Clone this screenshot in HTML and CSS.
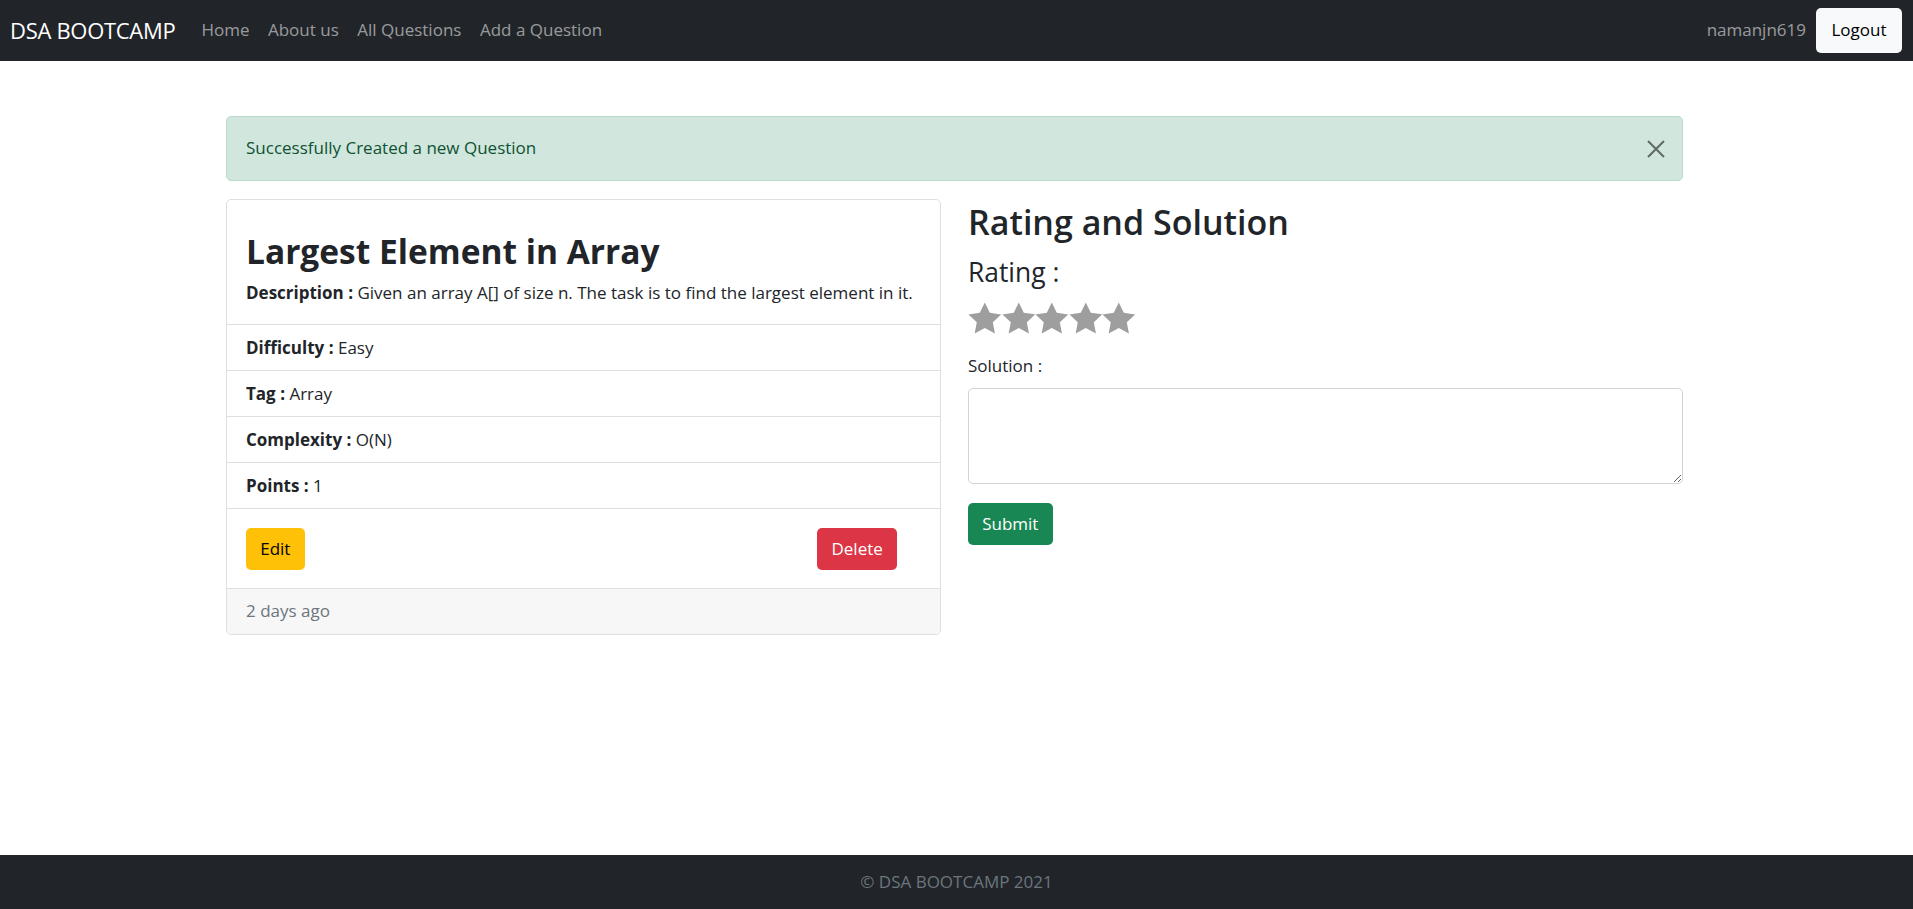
FILE: index.html
```html
<!DOCTYPE html>
<html lang="en">
<head>
<meta charset="utf-8">
<title>DSA BOOTCAMP</title>
<link rel="stylesheet" href="styles.css">
</head>
<body>
<nav class="navbar">
  <div class="nav-left">
    <a class="brand" href="#">DSA BOOTCAMP</a>
    <ul class="nav-links">
      <li><a href="#">Home</a></li>
      <li><a href="#">About us</a></li>
      <li><a href="#">All Questions</a></li>
      <li><a href="#">Add a Question</a></li>
    </ul>
  </div>
  <div class="nav-right">
    <span class="user">namanjn619</span>
    <button class="btn btn-light">Logout</button>
  </div>
</nav>

<main class="container">
  <div class="alert">
    <span>Successfully Created a new Question</span>
    <button class="btn-close" aria-label="Close">
      <svg width="18" height="18" viewBox="0 0 18 18"><path d="M1 1L17 17M17 1L1 17" stroke="#5e6a65" stroke-width="2" fill="none"/></svg>
    </button>
  </div>

  <div class="row">
    <div class="col">
      <div class="card">
        <div class="card-body">
          <h2 class="card-title">Largest Element in Array</h2>
          <p class="card-text"><b>Description :</b> Given an array A[] of size n. The task is to find the largest element in it.</p>
        </div>
        <ul class="list-group">
          <li class="list-item"><b>Difficulty :</b> Easy</li>
          <li class="list-item"><b>Tag :</b> Array</li>
          <li class="list-item"><b>Complexity :</b> O(N)</li>
          <li class="list-item"><b>Points :</b> 1</li>
        </ul>
        <div class="card-actions">
          <a class="btn btn-warning" href="#">Edit</a>
          <button class="btn btn-danger">Delete</button>
        </div>
        <div class="card-footer">2 days ago</div>
      </div>
    </div>

    <div class="col">
      <h2 class="side-title">Rating and Solution</h2>
      <h4 class="rating-title">Rating :</h4>
      <div class="stars">
        <svg viewBox="0.9 0.9 22.2 21.2" preserveAspectRatio="none" class="star"><path d="M12 1.2l3.3 6.9 7.5 1-5.5 5.2 1.4 7.5L12 18.2l-6.7 3.6 1.4-7.5L1.2 9.1l7.5-1z"/></svg>
        <svg viewBox="0.9 0.9 22.2 21.2" preserveAspectRatio="none" class="star"><path d="M12 1.2l3.3 6.9 7.5 1-5.5 5.2 1.4 7.5L12 18.2l-6.7 3.6 1.4-7.5L1.2 9.1l7.5-1z"/></svg>
        <svg viewBox="0.9 0.9 22.2 21.2" preserveAspectRatio="none" class="star"><path d="M12 1.2l3.3 6.9 7.5 1-5.5 5.2 1.4 7.5L12 18.2l-6.7 3.6 1.4-7.5L1.2 9.1l7.5-1z"/></svg>
        <svg viewBox="0.9 0.9 22.2 21.2" preserveAspectRatio="none" class="star"><path d="M12 1.2l3.3 6.9 7.5 1-5.5 5.2 1.4 7.5L12 18.2l-6.7 3.6 1.4-7.5L1.2 9.1l7.5-1z"/></svg>
        <svg viewBox="0.9 0.9 22.2 21.2" preserveAspectRatio="none" class="star"><path d="M12 1.2l3.3 6.9 7.5 1-5.5 5.2 1.4 7.5L12 18.2l-6.7 3.6 1.4-7.5L1.2 9.1l7.5-1z"/></svg>
      </div>
      <label class="form-label" for="solution">Solution :</label>
      <textarea id="solution" class="form-control" rows="3"></textarea>
      <button class="btn btn-success">Submit</button>
    </div>
  </div>
</main>

<footer class="footer">© DSA BOOTCAMP 2021</footer>
</body>
</html>
```

FILE: styles.css
```css
* { box-sizing: border-box; }

html, body { margin: 0; padding: 0; }

body {
  font-family: "Open Sans", "Noto Sans", sans-serif;
  font-size: 17px;
  line-height: 26.4px;
  color: #212529;
  background: #fff;
  min-height: 909px;
  display: flex;
  flex-direction: column;
}

a { text-decoration: none; }

/* Navbar */
.navbar {
  background: #212529;
  height: 61px;
  display: flex;
  align-items: center;
  justify-content: space-between;
  padding: 0 11px 0 10px;
}
.nav-left { display: flex; align-items: center; }
.brand {
  color: #fff;
  font-size: 22px;
  letter-spacing: -0.3px;
  margin-right: 26px;
}
.nav-links {
  list-style: none;
  margin: 0;
  padding: 0;
  display: flex;
  gap: 18.5px;
}
.nav-links a { color: rgba(255,255,255,.55); }
.nav-right { display: flex; align-items: center; }
.user { color: rgba(255,255,255,.55); margin-right: 10px; }

.btn {
  display: inline-block;
  font-family: inherit;
  font-size: 17px;
  line-height: 26.4px;
  height: 42px;
  padding: 6.8px 13.2px;
  border: 1px solid transparent;
  border-radius: 5px;
  cursor: pointer;
}
.btn-light {
  background: #f8f9fa;
  color: #000;
  height: 45px;
  width: 86px;
  padding: 0;
}
.btn-warning { background: #ffc107; color: #000; }
.btn-danger { background: #dc3545; color: #fff; }
.btn-success { background: #198754; color: #fff; }

/* Main */
.container {
  flex: 1;
  width: 1457px;
  margin: 55px auto 0 226px;
}

.alert {
  height: 65px;
  background: #d1e7dd;
  border: 1px solid #badbcc;
  color: #0f5132;
  border-radius: 5px;
  padding: 0 17px 0 19px;
  display: flex;
  align-items: center;
  justify-content: space-between;
  margin-bottom: 18px;
}
.btn-close {
  background: none;
  border: 0;
  padding: 0;
  width: 18px;
  height: 18px;
  display: flex;
  cursor: pointer;
}

.row {
  display: grid;
  grid-template-columns: 1fr 1fr;
  column-gap: 27px;
  align-items: start;
}

.card {
  border: 1px solid #dfdfdf;
  border-radius: 5px;
  overflow: hidden;
}
.card-body { padding: 29.5px 17.6px 17.6px 19px; }
.card-title {
  margin: 0 0 8.8px;
  font-size: 33.5px;
  line-height: 42px;
  font-weight: 700;
}
.card-text { margin: 0; }

.list-group { list-style: none; margin: 0; padding: 0; }
.list-item {
  border-top: 1px solid #dfdfdf;
  padding: 9.3px 17.6px 9.3px 19px;
}

.card-actions {
  border-top: 1px solid #dfdfdf;
  display: flex;
  justify-content: space-between;
  padding: 18.5px 43px 18.5px 19px;
}

.card-footer {
  border-top: 1px solid #dfdfdf;
  background: #f7f7f7;
  color: #6c757d;
  padding: 9px 19px;
}

.side-title {
  margin: 2px 0 13px;
  font-size: 34px;
  line-height: 42px;
  font-weight: 600;
}
.rating-title {
  margin: 0;
  font-size: 26.4px;
  line-height: 32px;
  font-weight: 400;
}
.stars { display: flex; margin: 14px 0 19px; height: 32px; }
.star { width: 33.6px; height: 32px; fill: #9e9e9e; }

.form-label { display: block; margin-bottom: 8.8px; }
.form-control {
  display: block;
  width: 100%;
  height: 96px;
  border: 1px solid #ced4da;
  border-radius: 5px;
  padding: 6.6px 13px;
  font-family: inherit;
  font-size: 17px;
  resize: vertical;
}
.btn-success { margin-top: 19px; }

.footer {
  background: #212529;
  color: #6c757d;
  height: 54px;
  display: flex;
  align-items: center;
  justify-content: center;
}
```
